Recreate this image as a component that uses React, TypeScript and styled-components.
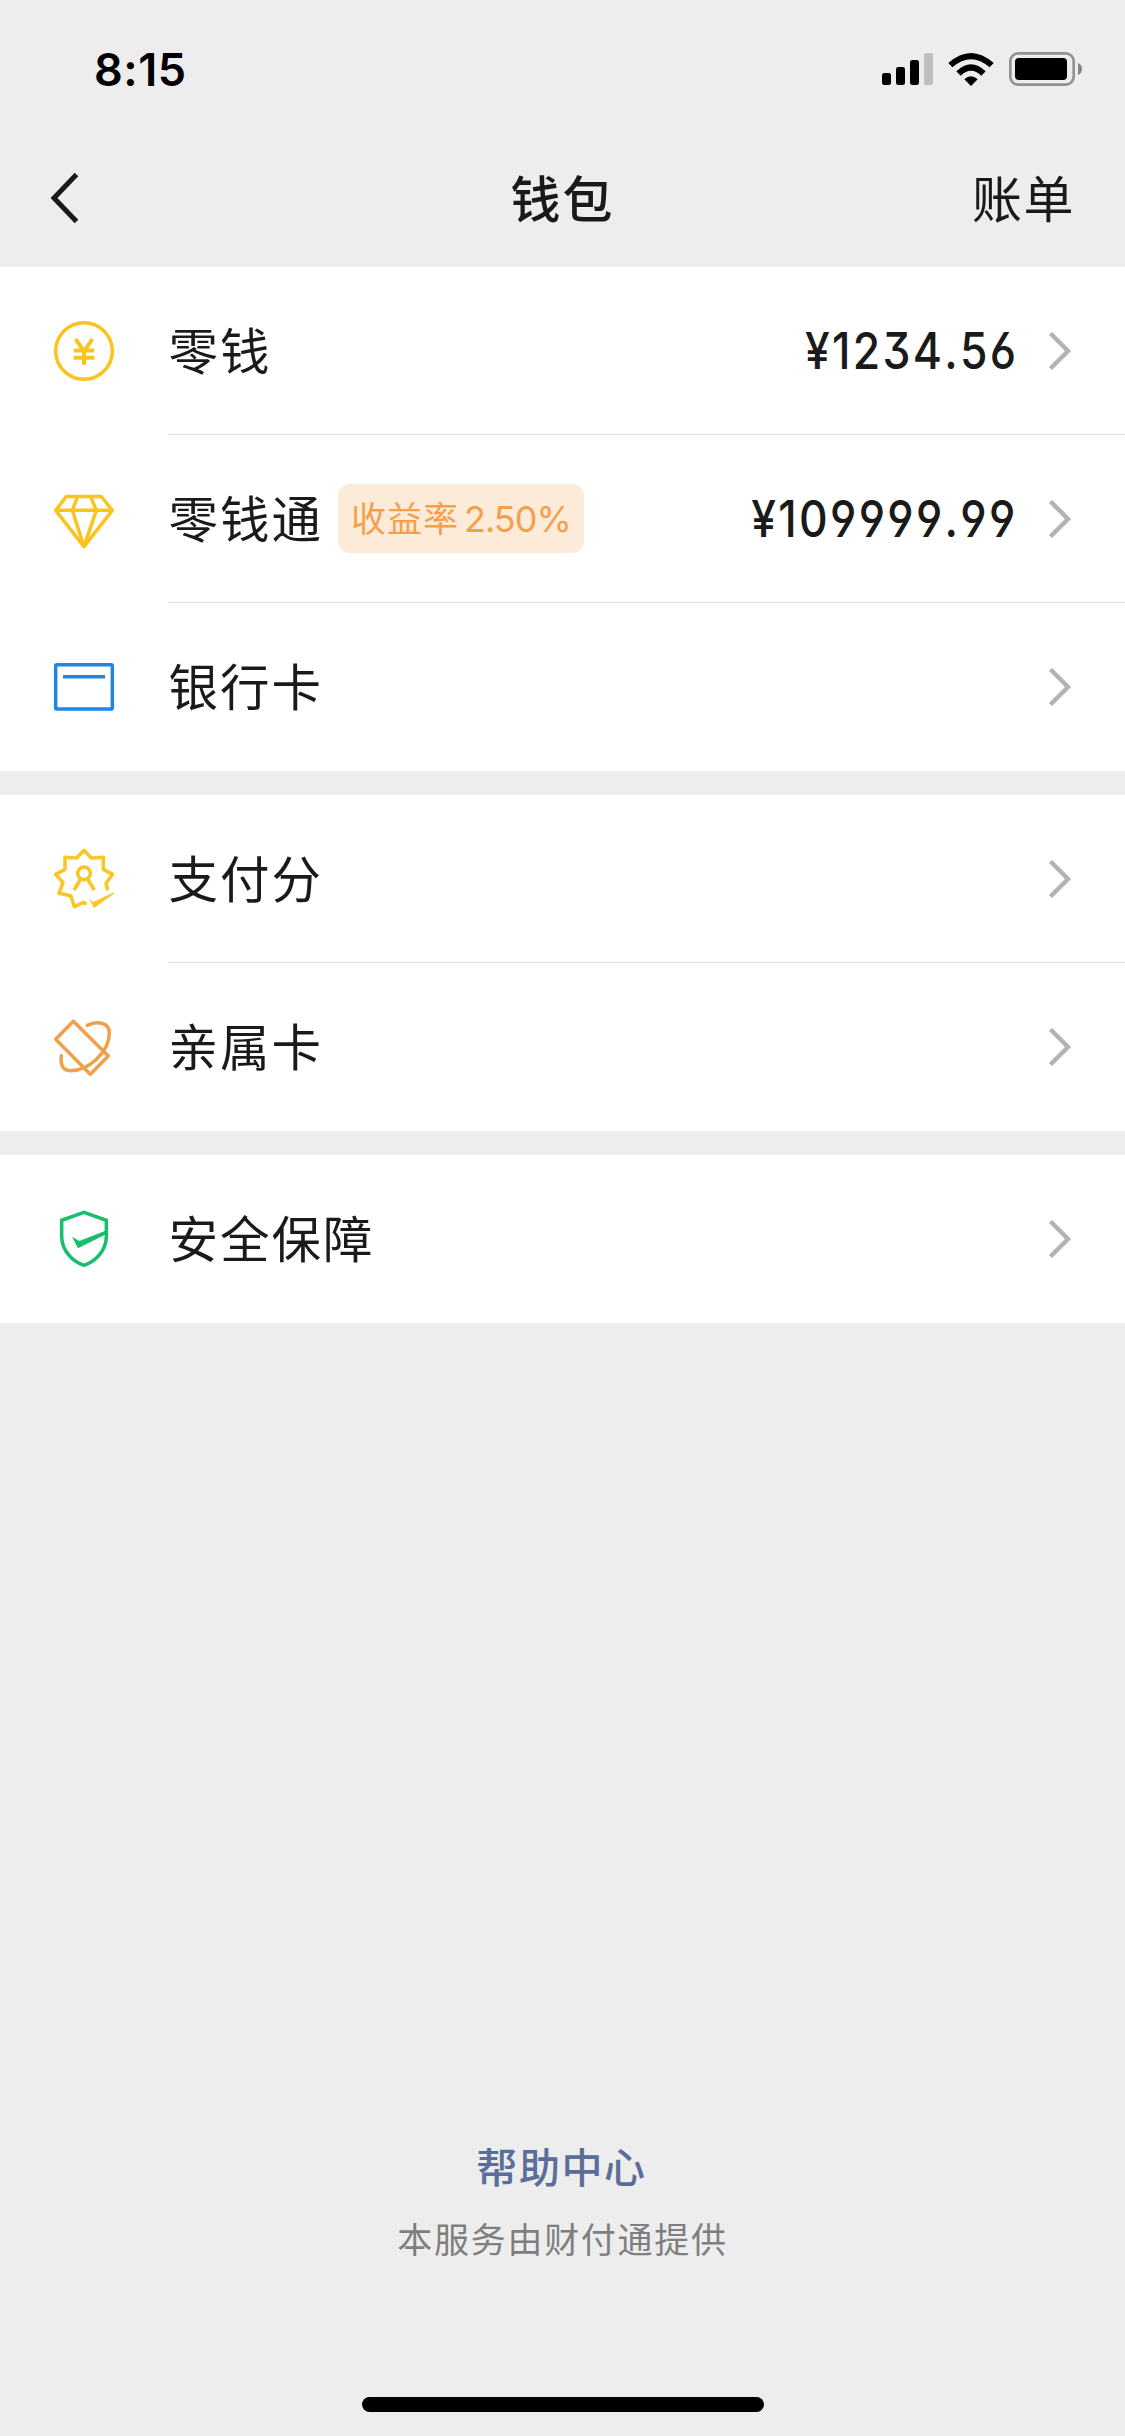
import React from "react";
import styled, { createGlobalStyle } from "styled-components";

const cjk = `"Noto Sans CJK SC", sans-serif`;

const GlobalStyle = createGlobalStyle`
  * { box-sizing: border-box; }
  body { margin: 0; background: #ededed; font-family: "Liberation Sans", ${cjk}; }
`;

const Screen = styled.div`
  display: flex;
  flex-direction: column;
  width: 1125px;
  height: 2436px;
  background: #ededed;
  color: #1a1a1a;
  font-family: ${cjk};
`;

const StatusBar = styled.div`
  display: flex;
  align-items: center;
  justify-content: space-between;
  height: 132px;
  padding: 6px 43px 0 94px;
  color: #000;
`;

const Clock = styled.span`
  padding-top: 2px;
  font: 600 45px/54px Inter, sans-serif;
  letter-spacing: 0.5px;
`;

const StatusIcons = styled.div`
  display: flex;
  align-items: center;
  gap: 15px;
  svg { display: block; }
`;

const NavBar = styled.header`
  display: grid;
  grid-template-columns: 1fr auto 1fr;
  align-items: center;
  height: 135px;
  padding: 0 48px 3px 48px;
  line-height: 74px;
`;

const BackIcon = styled.svg`
  display: block;
`;

const Title = styled.h1`
  margin: 0;
  padding-bottom: 4px;
  font-size: 50px;
  line-height: 74px;
  font-weight: 500;
  letter-spacing: 2px;
`;

const BillLink = styled.span`
  justify-self: end;
  padding: 0 2px 4px 0;
  font-size: 50px;
  letter-spacing: 1.5px;
`;

const Groups = styled.main`
  display: flex;
  flex-direction: column;
  gap: 24px;
`;

const Group = styled.section`
  background: #fff;
`;

const Row = styled.div`
  display: flex;
  height: 168px;
  padding-left: 48px;
  gap: 48px;
  align-items: center;
`;

const RowIcon = styled.svg`
  flex: none;
  width: 72px;
  height: 72px;
  fill: none;
  stroke-width: 10.5;
`;

const RowBody = styled.div<{ $divided: boolean }>`
  display: flex;
  flex: 1;
  align-items: center;
  height: 168px;
  padding-right: 53px;
  border-bottom: ${(p) => (p.$divided ? "1px solid #e2e2e2" : "1px solid transparent")};
`;

const Label = styled.span`
  padding: 0 0 4px 0.5px;
  font-size: 49.5px;
  line-height: 72px;
  letter-spacing: 2px;
`;

const Tag = styled.span`
  display: flex;
  align-items: center;
  gap: 5px;
  height: 69px;
  margin-left: 15px;
  padding: 0 13px;
  border-radius: 12px;
  background: #fdebda;
  color: #f3a04c;
`;

const TagText = styled.span`
  padding-bottom: 3px;
  font-size: 35px;
  line-height: 50px;
  letter-spacing: 1px;
`;

const Rate = styled.span`
  font-family: Inter, sans-serif;
  font-size: 36px;
  letter-spacing: -1px;
`;

const Amount = styled.span`
  margin-left: auto;
  font: 500 50.5px/60px Inter, sans-serif;
  font-feature-settings: "cv03", "cv04", "cv09";
  font-kerning: none;
  letter-spacing: 2.6px;
  transform: scaleX(0.88);
  transform-origin: right center;
`;

const Arrow = styled.svg<{ $push: boolean }>`
  flex: none;
  margin-left: ${(p) => (p.$push ? "auto" : "30px")};
`;

const Footer = styled.footer`
  display: flex;
  flex-direction: column;
  align-items: center;
  margin-top: auto;
  padding-bottom: 24px;
`;

const HelpLink = styled.a`
  margin-right: 2px;
  color: #5b6e9a;
  font-size: 41px;
  line-height: 60px;
  font-weight: 500;
  letter-spacing: 1.6px;
`;

const Provider = styled.p`
  margin: 17px 0 133px;
  color: #7f7f7f;
  font-size: 35px;
  line-height: 52px;
  letter-spacing: 1.7px;
`;

const HomeBar = styled.div`
  width: 402px;
  height: 15px;
  margin-left: 1px;
  border-radius: 8px;
  background: #000;
`;

const CoinIcon = () => (
  <RowIcon viewBox="0 0 216 216" stroke="#fac31e">
    <circle cx="108" cy="108" r="85" />
    <path strokeWidth="12" d="M83 72 108 110 133 72M108 106V149M77 106.500H139M77 128H139" />
  </RowIcon>
);

const DiamondIcon = () => (
  <RowIcon viewBox="0 0 216 216" stroke="#fac31e" strokeLinejoin="round">
    <path d="M55 40.500H160L193 82 108 191 23 82ZM23 82H193M89 41 73 82 108 191 145 82 128 41" />
  </RowIcon>
);

const CardIcon = () => (
  <RowIcon viewBox="0 0 216 216" stroke="#2086e6">
    <rect x="23" y="41" width="170" height="133" rx="4" />
    <path d="M45 77H171" />
  </RowIcon>
);

const ScoreIcon = () => (
  <RowIcon viewBox="0 0 216 216" stroke="#f9c623" strokeLinejoin="round">
    <path d="M179 142 174 121 194 94 166 79V43L130 45 108 22 86 45 51 43V79L23 94 45 119 33 151 68 158 79 191 107 178 115 184" />
    <circle cx="108" cy="91" r="19" />
    <path d="M98 108 78 141M119 108 139 141" />
    <path d="M122 166 136 177 198 148V152L138 195Z" fill="#f9c623" stroke="none" />
  </RowIcon>
);

const FamilyIcon = () => (
  <RowIcon viewBox="0 0 216 216" stroke="#f0a04b" strokeLinejoin="round" strokeLinecap="round">
    <path d="M76 31 181 135 127 190 23 85Z" />
    <path d="M118 43C145 29 184 33 184 65C184 125 120 179 68 179C43 179 37 160 40 134" />
  </RowIcon>
);

const ShieldIcon = () => (
  <RowIcon viewBox="0 0 216 216" stroke="#17be6b">
    <path d="M108 28 175 52V100C175 145 140 177 108 187C76 177 41 145 41 100V52Z" />
    <path d="M72 101 94 114 176 82V93L90 136Z" fill="#17be6b" stroke="none" />
  </RowIcon>
);

type Item = {
  label: string;
  Icon: React.ComponentType;
  amount?: string;
  tag?: [string, string];
};

const groups: Item[][] = [
  [
    { label: "零钱", Icon: CoinIcon, amount: "¥1234.56" },
    { label: "零钱通", Icon: DiamondIcon, amount: "¥109999.99", tag: ["收益率", "2.50%"] },
    { label: "银行卡", Icon: CardIcon },
  ],
  [
    { label: "支付分", Icon: ScoreIcon },
    { label: "亲属卡", Icon: FamilyIcon },
  ],
  [{ label: "安全保障", Icon: ShieldIcon }],
];

export default function App() {
  return (
    <Screen>
      <GlobalStyle />
      <StatusBar>
        <Clock>8:15</Clock>
        <StatusIcons>
          <svg width="51" height="32" viewBox="0 0 153 96">
            <rect y="60" width="27" height="36" rx="7" />
            <rect x="42" y="42" width="27" height="54" rx="7" />
            <rect x="84" y="21" width="27" height="75" rx="7" />
            <rect x="126" width="27" height="96" rx="7" fill="#bebebe" />
          </svg>
          <svg width="46" height="33" viewBox="0 0 138 99">
            <path d="M1 30Q69 -30 137 30L125 43Q69 -6 13 43Z" />
            <path d="M25 55Q69 12 113 55L100 68Q69 39 38 68Z" />
            <path d="M49 79Q69 60 89 79L69 99Z" />
          </svg>
          <svg width="73" height="34" viewBox="0 0 219 102">
            <rect x="4" y="4" width="190" height="94" rx="24" fill="none" stroke="#929292" strokeWidth="8" />
            <rect x="18" y="18" width="156" height="66" rx="12" />
            <path d="M207 33Q219 38 219 51Q219 64 207 69Z" fill="#858585" />
          </svg>
        </StatusIcons>
      </StatusBar>
      <NavBar>
        <BackIcon width="32" height="54" viewBox="0 0 32 54" fill="none" stroke="#1a1a1a" strokeWidth="5">
          <path d="M28.500 3.500 6 27 28.500 50.500" />
        </BackIcon>
        <Title>钱包</Title>
        <BillLink>账单</BillLink>
      </NavBar>
      <Groups>
        {groups.map((items, g) => (
          <Group key={g}>
            {items.map(({ label, Icon, amount, tag }, i) => (
              <Row key={label}>
                <Icon />
                <RowBody $divided={i < items.length - 1}>
                  <Label>{label}</Label>
                  {tag && (
                    <Tag>
                      <TagText>{tag[0]}</TagText>
                      <Rate>{tag[1]}</Rate>
                    </Tag>
                  )}
                  {amount && <Amount>{amount}</Amount>}
                  <Arrow $push={!amount} width="24" height="42" viewBox="0 0 24 42" fill="none" stroke="#b3b3b3" strokeWidth="4.500">
                    <path d="M2.500 3.500 20 21 2.500 38.500" />
                  </Arrow>
                </RowBody>
              </Row>
            ))}
          </Group>
        ))}
      </Groups>
      <Footer>
        <HelpLink>帮助中心</HelpLink>
        <Provider>本服务由财付通提供</Provider>
        <HomeBar />
      </Footer>
    </Screen>
  );
}
